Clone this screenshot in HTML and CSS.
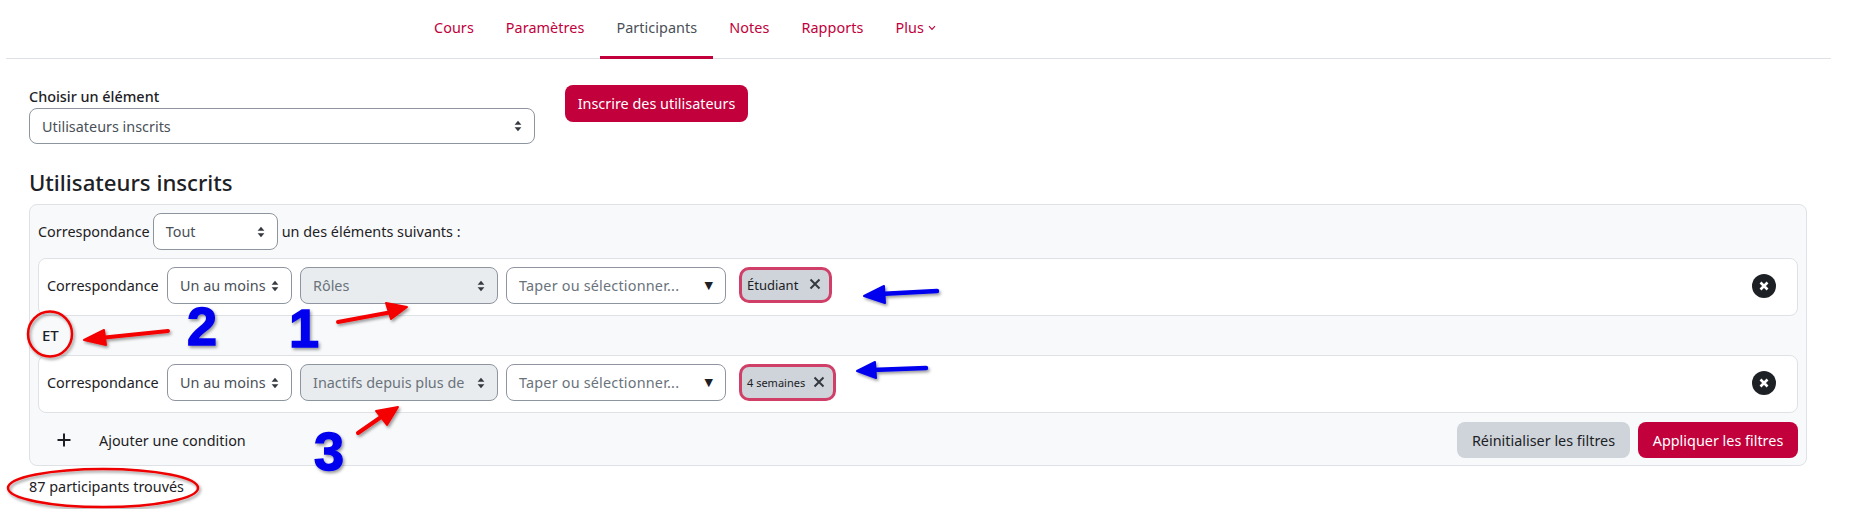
FILE: index.html
```html
<!DOCTYPE html>
<html lang="fr">
<head>
<meta charset="utf-8">
<title>Participants</title>
<link rel="stylesheet" href="styles.css">
</head>
<body>
<nav class="tabs">
  <a class="tab">Cours</a>
  <a class="tab">Paramètres</a>
  <a class="tab active">Participants</a>
  <a class="tab">Notes</a>
  <a class="tab">Rapports</a>
  <a class="tab">Plus <svg class="chev" viewBox="0 0 8 6" width="8" height="6"><path d="M1 1.2 4 4.4 7 1.2" fill="none" stroke="currentColor" stroke-width="1.1"/></svg></a>
</nav>
<main class="main">
  <div class="top">
    <div class="chooser">
      <label class="label">Choisir un élément</label>
      <div class="sel sel-main"><span>Utilisateurs inscrits</span><svg class="updown" viewBox="0 0 8 12" width="8" height="12"><path d="M4 .8 7.4 4.8H.6ZM4 11.2.6 7.2H7.4Z" fill="#343a40"/></svg></div>
    </div>
    <button class="btn btn-primary enrol">Inscrire des utilisateurs</button>
  </div>
  <h2 class="title">Utilisateurs inscrits</h2>
  <section class="panel">
    <div class="match">
      <span>Correspondance</span>
      <div class="sel sel-all"><span>Tout</span><svg class="updown" viewBox="0 0 8 12" width="8" height="12"><path d="M4 .8 7.4 4.8H.6ZM4 11.2.6 7.2H7.4Z" fill="#343a40"/></svg></div>
      <span>un des éléments suivants :</span>
    </div>
    <div class="row">
      <span class="row-label">Correspondance</span>
      <div class="sel sel-any"><span>Un au moins</span><svg class="updown" viewBox="0 0 8 12" width="8" height="12"><path d="M4 .8 7.4 4.8H.6ZM4 11.2.6 7.2H7.4Z" fill="#343a40"/></svg></div>
      <div class="sel sel-field"><span>Rôles</span><svg class="updown" viewBox="0 0 8 12" width="8" height="12"><path d="M4 .8 7.4 4.8H.6ZM4 11.2.6 7.2H7.4Z" fill="#343a40"/></svg></div>
      <div class="sel sel-type"><span class="typed">Taper ou sélectionner...</span><span class="tri">▼</span></div>
      <div class="chip chip-a"><span>Étudiant</span><svg class="x" viewBox="0 0 12 12" width="12" height="12"><path d="M1.5 1.5 10.5 10.5M10.5 1.5 1.5 10.5" stroke="#343a40" stroke-width="2" fill="none"/></svg></div>
      <svg class="close" viewBox="0 0 24 24" width="24" height="24"><circle cx="12" cy="12" r="12" fill="#1d2125"/><path d="M8.5 8.5 15.5 15.5M15.5 8.5 8.5 15.5" stroke="#fff" stroke-width="2.6" fill="none"/></svg>
    </div>
    <div class="join">ET</div>
    <div class="row">
      <span class="row-label">Correspondance</span>
      <div class="sel sel-any"><span>Un au moins</span><svg class="updown" viewBox="0 0 8 12" width="8" height="12"><path d="M4 .8 7.4 4.8H.6ZM4 11.2.6 7.2H7.4Z" fill="#343a40"/></svg></div>
      <div class="sel sel-field"><span>Inactifs depuis plus de</span><svg class="updown" viewBox="0 0 8 12" width="8" height="12"><path d="M4 .8 7.4 4.8H.6ZM4 11.2.6 7.2H7.4Z" fill="#343a40"/></svg></div>
      <div class="sel sel-type"><span class="typed">Taper ou sélectionner...</span><span class="tri">▼</span></div>
      <div class="chip chip-b"><span>4 semaines</span><svg class="x" viewBox="0 0 12 12" width="12" height="12"><path d="M1.5 1.5 10.5 10.5M10.5 1.5 1.5 10.5" stroke="#343a40" stroke-width="2" fill="none"/></svg></div>
      <svg class="close" viewBox="0 0 24 24" width="24" height="24"><circle cx="12" cy="12" r="12" fill="#1d2125"/><path d="M8.5 8.5 15.5 15.5M15.5 8.5 8.5 15.5" stroke="#fff" stroke-width="2.6" fill="none"/></svg>
    </div>
    <div class="foot">
      <div class="add"><svg class="plus" viewBox="0 0 14 14" width="14" height="14"><path d="M7 .5V13.5M.5 7H13.5" stroke="#1d2125" stroke-width="2" fill="none"/></svg><span>Ajouter une condition</span></div>
      <button class="btn btn-grey">Réinitialiser les filtres</button>
      <button class="btn btn-primary">Appliquer les filtres</button>
    </div>
  </section>
  <p class="count">87 participants trouvés</p>
</main>
<svg class="marks" width="1873" height="509" viewBox="0 0 1873 509">
  <defs>
    <filter id="sh" x="-20%" y="-20%" width="150%" height="150%"><feDropShadow dx="1.5" dy="2" stdDeviation="1.5" flood-color="#000" flood-opacity=".4"/></filter>
  </defs>
  <g filter="url(#sh)">
    <ellipse cx="50" cy="334" rx="22" ry="22.5" fill="none" stroke="#ee0000" stroke-width="2.5"/>
    <ellipse cx="103" cy="488" rx="95" ry="19" fill="none" stroke="#ee0000" stroke-width="2.5"/>
    <g fill="#f40000" stroke="#f40000" stroke-linejoin="round" stroke-linecap="round">
      <path d="M338 322 392 312" stroke-width="4" fill="none"/>
      <path d="M407 307 386 303 391 319Z" stroke-width="2"/>
      <path d="M168 331 100 338" stroke-width="4" fill="none"/>
      <path d="M84 340 104 330 106 345Z" stroke-width="2"/>
      <path d="M358 433 384 415" stroke-width="4" fill="none"/>
      <path d="M398 407 376 411 387 425Z" stroke-width="2"/>
    </g>
    <g fill="#0000ee" stroke="#0000ee" stroke-linejoin="round" stroke-linecap="round">
      <path d="M937 291 880 294" stroke-width="4.5" fill="none"/>
      <path d="M864 296 884 286 885 303Z" stroke-width="2"/>
      <path d="M926 368 872 370" stroke-width="4.5" fill="none"/>
      <path d="M857 371 875 362 876 378Z" stroke-width="2"/>
    </g>
    <g class="nums">
      <text x="289" y="347">1</text>
      <text x="187" y="345">2</text>
      <text x="314" y="470">3</text>
    </g>
  </g>
</svg>
</body>
</html>
```
FILE: styles.css
```css
* { box-sizing: border-box; }
html, body { margin: 0; padding: 0; }
body {
  position: relative;
  width: 1873px;
  height: 509px;
  overflow: hidden;
  background: #fff;
  color: #1d2125;
  font-family: "Noto Sans", "Open Sans", sans-serif;
  font-size: 14.4px;
  line-height: 21px;
}
.tabs {
  display: flex;
  align-items: stretch;
  height: 59px;
  margin-left: 6px;
  width: 1825px;
  padding-left: 412px;
  border-bottom: 1px solid #dee2e6;
}
.tab {
  display: flex;
  align-items: center;
  gap: 4px;
  padding: 0 16px 1px;
  color: #c1003c;
  letter-spacing: .06px;
  margin-bottom: -1px;
  border-bottom: 3px solid transparent;
}
.tab.active { color: #495057; border-bottom-color: #c1003c; }
.main { width: 1778px; margin-left: 29px; }
.top { display: flex; align-items: flex-start; gap: 30px; padding-top: 26px; }
.chooser { padding-top: 1px; width: 506px; }
.label { display: block; font-weight: 500; height: 22px; }
.sel {
  display: flex;
  align-items: center;
  justify-content: space-between;
  height: 37px;
  padding: 0 12px;
  border: 1px solid #8f959e;
  border-radius: 8px;
  background: #fff;
  color: #495057;
  white-space: nowrap;
}
.sel-main { width: 506px; height: 36px; }
.updown { flex: none; }
.btn {
  height: 37px;
  padding: 0 12px;
  border: 0;
  border-radius: 8px;
  font: inherit;
  white-space: nowrap;
}
.btn-primary { background: #c1003c; color: #fff; }
.btn-grey { background: #ced4da; color: #1d2125; }
.enrol { width: 183px; }
.title {
  margin: 25px 0 8px;
  font-size: 22.2px;
  line-height: 27px;
  font-weight: 500;
}
.panel {
  height: 262px;
  padding: 8px;
  border: 1px solid #dee2e6;
  border-radius: 8px;
  background: #f8f9fa;
}
.match { display: flex; align-items: center; height: 37px; gap: 3px; margin-bottom: 8px; }
.sel-all { width: 125px; margin-right: 1px; }
.row {
  display: flex;
  align-items: flex-start;
  height: 58px;
  padding: 8px;
  border: 1px solid #dee2e6;
  border-radius: 8px;
  background: #fff;
}
.row-label { width: 120px; flex: none; line-height: 37px; }
.sel-any { width: 125px; flex: none; margin-right: 8px; }
.sel-field { width: 198px; flex: none; margin-right: 8px; background: #e9ecef; color: #6a737b; }
.sel-type { width: 220px; flex: none; margin-right: 13px; color: #6a737b; }
.typed { letter-spacing: .2px; }
.tri { color: #1d2125; font-size: 11px; font-family: "DejaVu Sans", sans-serif; }
.chip {
  display: flex;
  align-items: center;
  justify-content: space-between;
  height: 36px;
  padding: 0 8px 0 5px;
  border: 3px solid #d03f68;
  border-radius: 10px;
  background: #ced4da;
  font-size: 13px;
}
.chip .x { margin-top: -2px; }
.chip-a { width: 93px; }
.chip-b { width: 97px; font-size: 11px; height: 37px; }
.close { margin-left: auto; margin-right: 13px; margin-top: 7px; flex: none; }
.join { height: 39px; line-height: 39px; padding-left: 4px; font-size: 15px; font-weight: 500; }
.foot { display: flex; align-items: center; gap: 8px; margin-top: 9px; height: 36px; }
.add { display: flex; align-items: center; flex: 1; padding-left: 19px; gap: 28px; }
.plus { flex: none; }
.foot .btn-grey { width: 173px; height: 36px; }
.foot .btn-primary { width: 160px; height: 36px; }
.count { margin: 10px 0 0; }
.marks { position: absolute; left: 0; top: 0; pointer-events: none; }
.nums text {
  font-family: "Liberation Sans", Arial, sans-serif;
  font-weight: 700;
  font-size: 54px;
  fill: #0000ee;
  stroke: #0000ee;
  stroke-width: 1.5px;
}
```
